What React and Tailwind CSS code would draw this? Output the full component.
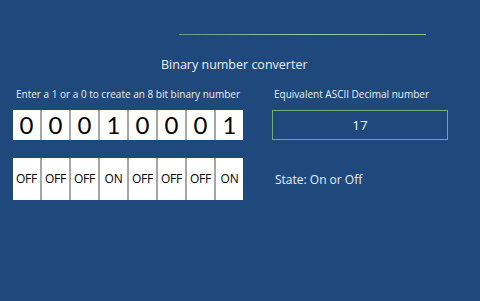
import React from 'react';

const BITS = ['0', '0', '0', '1', '0', '0', '0', '1'];

export default function App() {
  return (
    <div className="w-[480px] h-[301px] bg-[#1f497d] text-white overflow-hidden" style={{ fontFamily: '"Open Sans", sans-serif' }}>
      <div className="pt-[34px] pl-[179px]">
        <div className="w-[247px] h-px bg-gradient-to-r from-[#5a9a9a] via-[#8fd0a8] to-[#7fc0a0]" />
      </div>

      <div className="mt-[21px] pl-[161px] text-[12.5px] leading-[18px] text-[#e8eef6]">Binary number converter</div>

      <div className="flex mt-[13px]">
        {/* left side */}
        <div className="pl-[13px] w-[272px] shrink-0">
          <div className="pl-[3px] text-[10px] leading-[14px] text-[#e8eef6] whitespace-nowrap">Enter a 1 or a 0 to create an 8 bit binary number</div>
          <div className="mt-[9px] flex w-[230px] h-[30px] bg-white">
            {BITS.map((b, i) => (
              <div key={i} className="flex-1 flex items-center justify-center border-r-2 border-[#a6a6a6] last:border-r-0 text-black text-[24px] leading-none" style={{ fontFamily: '"Lato", sans-serif' }}>
                {b}
              </div>
            ))}
          </div>
          <div className="mt-[18px] flex w-[230px] h-[42px] bg-white">
            {BITS.map((b, i) => (
              <div key={i} className="flex-1 flex items-center justify-center border-r-2 border-[#a6a6a6] last:border-r-0 text-black text-[12px] tracking-[-0.3px]">
                {b === '1' ? 'ON' : 'OFF'}
              </div>
            ))}
          </div>
        </div>

        {/* right side */}
        <div>
          <div className="pl-[2px] text-[10px] leading-[14px] text-[#e8eef6] whitespace-nowrap">Equivalent ASCII Decimal number</div>
          <div className="mt-[9px] w-[176px] h-[30px] border border-[#6fb06f] flex items-center justify-center text-[13.5px] text-[#eef3f8]">17</div>
          <div className="mt-[32px] pl-[3px] text-[12px] leading-[16px] text-[#e8eef6]">State: On or Off</div>
        </div>
      </div>
    </div>
  );
}
